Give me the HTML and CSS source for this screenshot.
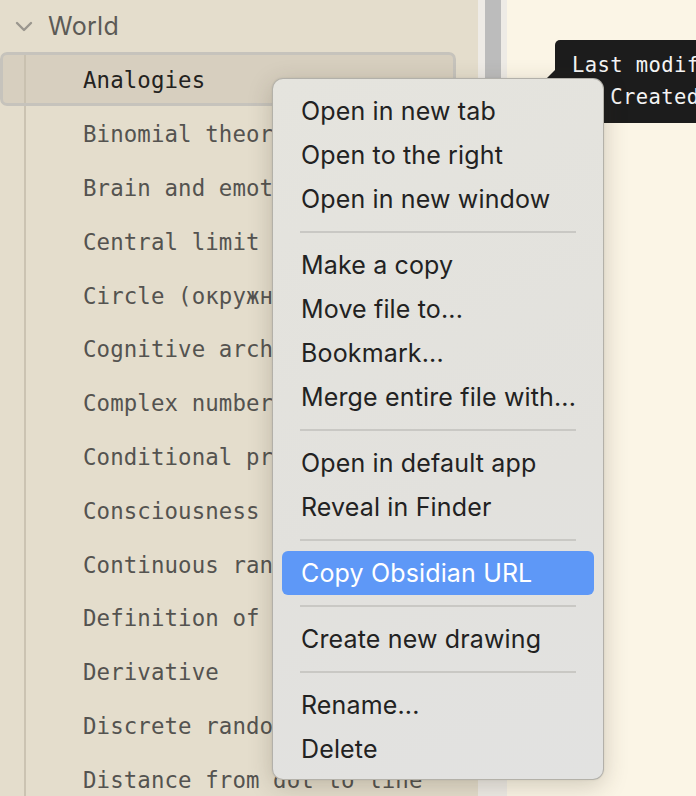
FILE: index.html
```html
<!DOCTYPE html>
<html>
<head>
<meta charset="utf-8">
<link rel="stylesheet" href="styles.css">
</head>
<body>
<div class="app">
  <aside class="sidebar">
    <div class="folder">
      <svg class="chevron" width="18" height="12" viewBox="0 0 18 12"><path d="M2 2 L9 9 L16 2" fill="none" stroke="#9a968e" stroke-width="2.4" stroke-linecap="round" stroke-linejoin="round"/></svg>
      <span class="folder-name">World</span>
    </div>
    <div class="children">
      <div class="row selected">Analogies</div>
      <div class="row">Binomial theorem</div>
      <div class="row">Brain and emotions</div>
      <div class="row">Central limit theorem</div>
      <div class="row">Circle (окружность)</div>
      <div class="row">Cognitive architecture</div>
      <div class="row">Complex numbers</div>
      <div class="row">Conditional probability</div>
      <div class="row">Consciousness</div>
      <div class="row">Continuous random variable</div>
      <div class="row">Definition of probability</div>
      <div class="row">Derivative</div>
      <div class="row">Discrete random variable</div>
      <div class="row">Distance from dot to line</div>
    </div>
  </aside>
  <div class="scrolltrack"><div class="thumb"></div></div>
  <main class="main"></main>
</div>

<div class="tooltip">
  <div>Last modified at 2023-03-05 21:42</div>
  <div>Created at 2023-03-05 21:42</div>
</div>

<div class="menu">
  <div class="item">Open in new tab</div>
  <div class="item">Open to the right</div>
  <div class="item">Open in new window</div>
  <div class="sep"></div>
  <div class="item">Make a copy</div>
  <div class="item">Move file to...</div>
  <div class="item">Bookmark...</div>
  <div class="item">Merge entire file with...</div>
  <div class="sep"></div>
  <div class="item">Open in default app</div>
  <div class="item">Reveal in Finder</div>
  <div class="sep"></div>
  <div class="item active">Copy Obsidian URL</div>
  <div class="sep"></div>
  <div class="item">Create new drawing</div>
  <div class="sep"></div>
  <div class="item">Rename...</div>
  <div class="item">Delete</div>
</div>
</body>
</html>
```

FILE: styles.css
```css
html, body {
  margin: 0;
  padding: 0;
}
body {
  width: 696px;
  height: 796px;
  overflow: hidden;
  position: relative;
  background: #fbf5e6;
}
.app {
  display: flex;
  height: 796px;
}
.sidebar {
  width: 478px;
  flex: none;
  background: #e4ddcc;
  overflow: hidden;
}
.folder {
  height: 52px;
  display: flex;
  align-items: center;
  padding-left: 15px;
}
.chevron {
  margin-right: 15px;
  margin-top: 2px;
}
.folder-name {
  font-family: "Inter", "Noto Sans", sans-serif;
  font-size: 25px;
  color: #5c5a56;
  letter-spacing: 0.3px;
}
.children {
  display: flex;
  flex-direction: column;
}
.row {
  height: 53.8px;
  flex: none;
  box-sizing: border-box;
  display: flex;
  align-items: center;
  padding-left: 83px;
  padding-top: 3px;
  font-family: "DejaVu Sans Mono", "Liberation Mono", monospace;
  font-size: 22.4px;
  letter-spacing: 0.1px;
  color: #545350;
  white-space: nowrap;
  background: linear-gradient(#cbc3b2, #cbc3b2) 24px 0 / 2px 100% no-repeat;
}
.row.selected {
  width: 456px;
  color: #232220;
  border-radius: 7px;
  background: linear-gradient(#c9c1b0, #c9c1b0) 24px 0 / 2px 100% no-repeat, #d7cfbf;
  box-shadow: inset 0 0 0 3px #c6c3bc;
}
.scrolltrack {
  width: 29px;
  flex: none;
  background: #eeebe6;
  padding-left: 7px;
  box-sizing: border-box;
}
.thumb {
  width: 16px;
  height: 420px;
  background: #bcbcbc;
}
.main {
  flex: 1;
  background: #fbf5e6;
}
.tooltip {
  position: absolute;
  left: 555px;
  top: 40px;
  background: #1c1c1c;
  color: #f4f4f4;
  border-radius: 5px;
  padding: 9px 17px 10px;
  font-family: "DejaVu Sans Mono", "Liberation Mono", monospace;
  font-size: 20.5px;
  line-height: 32px;
  letter-spacing: 0.4px;
  text-align: center;
  white-space: nowrap;
}
.tooltip::before {
  content: "";
  position: absolute;
  left: -8px;
  top: 30px;
  border-style: solid;
  border-width: 8px 8px 8px 0;
  border-color: transparent #1c1c1c transparent transparent;
}
.menu {
  position: absolute;
  left: 272px;
  top: 78px;
  width: 332px;
  box-sizing: border-box;
  padding: 10px 9px 8px;
  background: linear-gradient(160deg, #e5e4de 0%, #e2e1dd 60%, #e2e2e1 100%);
  border: 1px solid rgba(120, 115, 105, 0.45);
  border-radius: 11px;
  box-shadow: 0 6px 24px rgba(60, 50, 30, 0.22), 0 0 2px rgba(0, 0, 0, 0.1);
  font-family: "Inter", "Noto Sans", sans-serif;
  font-size: 25px;
  letter-spacing: 0.15px;
  color: #222222;
}
.item {
  height: 44px;
  line-height: 44px;
  padding-left: 19px;
  border-radius: 6px;
  white-space: nowrap;
}
.item.active {
  background: #5e98f7;
  color: #ffffff;
}
.sep {
  height: 22px;
  margin: 0 18px;
  background: linear-gradient(#c9c8c4, #c9c8c4) 0 10px / 100% 2px no-repeat;
}
```
